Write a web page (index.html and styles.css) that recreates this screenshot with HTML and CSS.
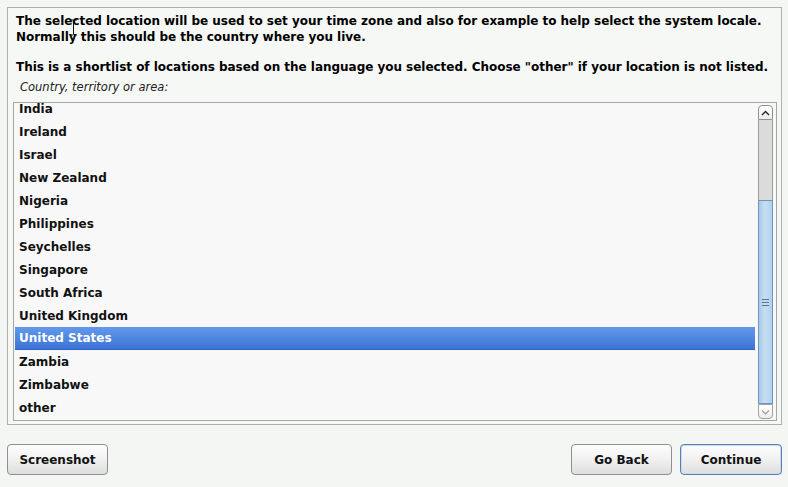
FILE: index.html
```html
<!DOCTYPE html>
<html>
<head>
<meta charset="utf-8">
<link rel="stylesheet" href="styles.css">
</head>
<body>
<div class="page">
  <div class="panel">
    <p class="desc">The selected location will be used to set your time zone and also for example to help select the system locale.<br>Normally this should be the country where you live.</p>
    <p class="desc second">This is a shortlist of locations based on the language you selected. Choose "other" if your location is not listed.</p>
    <div class="label">Country, territory or area:</div>
    <div class="listbox">
      <div class="viewport">
        <ul class="list">
          <li>India</li>
          <li>Ireland</li>
          <li>Israel</li>
          <li>New Zealand</li>
          <li>Nigeria</li>
          <li>Philippines</li>
          <li>Seychelles</li>
          <li>Singapore</li>
          <li>South Africa</li>
          <li>United Kingdom</li>
          <li class="selected">United States</li>
          <li>Zambia</li>
          <li>Zimbabwe</li>
          <li>other</li>
        </ul>
      </div>
      <div class="scrollbar">
        <div class="sb-btn up"><svg width="9" height="6" viewBox="0 0 9 6"><path d="M1 5 L4.5 1.5 L8 5" fill="none" stroke="#222" stroke-width="1.4"/></svg></div>
        <div class="trough">
          <div class="thumb"><span class="grip"></span></div>
        </div>
        <div class="sb-btn down"><svg width="9" height="6" viewBox="0 0 9 6"><path d="M1 1.5 L4.5 5 L8 1.5" fill="none" stroke="#9a9a9a" stroke-width="1.2"/></svg></div>
      </div>
    </div>
  </div>
  <div class="buttons">
    <button class="btn">Screenshot</button>
    <div class="spacer"></div>
    <button class="btn">Go Back</button>
    <button class="btn default">Continue</button>
  </div>
  <svg class="cursor" width="9" height="17" viewBox="0 0 9 17"><path d="M1 1 H3.5 M5.5 1 H8 M4.5 1.5 V15.5 M1 16 H3.5 M5.5 16 H8" fill="none" stroke="#111" stroke-width="1"/><path d="M3.5 1 L4.5 1.8 L5.5 1 M3.5 16 L4.5 15.2 L5.5 16" fill="none" stroke="#111" stroke-width="1"/></svg>
</div>
</body>
</html>
```

FILE: styles.css
```css
* { box-sizing: border-box; }
html, body {
  margin: 0;
  padding: 0;
  background: #f4f6f4;
}
body {
  font-family: "DejaVu Sans", "Liberation Sans", sans-serif;
  color: #000;
  width: 788px;
  height: 487px;
  overflow: hidden;
}
.page {
  position: relative;
  padding: 7px 6px 0 7px;
}
.panel {
  border: 1px solid #aeb0ae;
  height: 418px;
  padding: 5px 4px 3px 5px;
  background: #f6f8f6;
  display: flex;
  flex-direction: column;
}
.desc {
  margin: 0;
  padding-left: 3px;
  font-weight: bold;
  font-size: 12px;
  line-height: 16px;
  white-space: nowrap;
  letter-spacing: -0.03px;
}
.desc.second {
  margin-top: 14px;
}
.label {
  margin-top: 4px;
  padding-left: 7px;
  font-style: italic;
  font-size: 11.5px;
  line-height: 16px;
  color: #222;
  height: 23px;
  flex: none;
}
.listbox {
  flex: 1;
  border: 1px solid #a4a6a4;
  background: #f8f8f8;
  display: flex;
  padding: 0 3px 0 1px;
  min-height: 0;
}
.viewport {
  width: 740px;
  overflow: hidden;
}
.list {
  list-style: none;
  margin: -6px 0 0 0;
  padding: 0;
}
.list li {
  height: 23px;
  line-height: 22px;
  padding: 1px 0 0 4px;
  font-weight: bold;
  font-size: 12px;
  color: #111;
}
.list li.selected {
  color: #fff;
  background: linear-gradient(#6399ea, #3c74d8);
  border-bottom: 1px solid #2f62c2;
  line-height: 21px;
}
.scrollbar {
  margin-left: 3px;
  width: 15px;
  padding: 2px 0 1px;
  display: flex;
  flex-direction: column;
}
.sb-btn {
  height: 15px;
  flex: none;
  border: 1px solid #8f918f;
  background: linear-gradient(#ffffff, #eceeec);
  display: flex;
  align-items: center;
  justify-content: center;
}
.sb-btn.up {
  border-radius: 4px 4px 0 0;
}
.sb-btn.down {
  border-radius: 0 0 4px 4px;
  border-color: #a0a2a0;
}
.trough {
  flex: 1;
  background: #d9dcd9;
  border-left: 1px solid #9c9e9c;
  border-right: 1px solid #9c9e9c;
  display: flex;
  flex-direction: column;
  justify-content: flex-end;
}
.thumb {
  height: 204px;
  margin: 0 -1px;
  border: 1px solid #7096bf;
  background: linear-gradient(to right, #a9c9e6, #c7def2 45%, #b2d0ec);
  display: flex;
  align-items: center;
  justify-content: center;
}
.grip {
  display: block;
  width: 7px;
  height: 7px;
  border-top: 1px solid #55779c;
  border-bottom: 1px solid #55779c;
  position: relative;
}
.grip::after {
  content: "";
  position: absolute;
  left: 0;
  right: 0;
  top: 2px;
  border-top: 1px solid #55779c;
}
.buttons {
  display: flex;
  margin-top: 19px;
  gap: 8px;
}
.spacer { flex: 1; }
.btn {
  width: 101px;
  height: 31px;
  border: 1px solid #8e908e;
  border-radius: 4px;
  background: linear-gradient(#fdfdfd, #f2f2f2 45%, #dedede);
  font-family: "DejaVu Sans", sans-serif;
  font-weight: bold;
  font-size: 12px;
  color: #111;
  padding: 0;
}
.btn.default {
  width: 102px;
  border-color: #5a7fb3;
  box-shadow: inset 0 0 0 1px #c8d8ee;
}
.cursor {
  position: absolute;
  left: 69px;
  top: 19px;
}
```
